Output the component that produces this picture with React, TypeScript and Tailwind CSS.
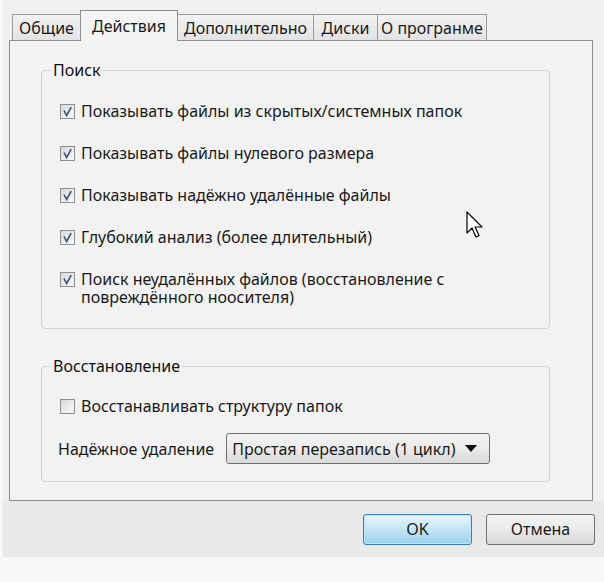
import React from 'react';

const font = { fontFamily: '"Noto Sans", "Liberation Sans", sans-serif' };

const tabs = [
  { t: 'Общие', w: 'w-[69px]' },
  { t: 'Действия', w: 'w-[98px]' },
  { t: 'Дополнительно', w: 'w-[137px]' },
  { t: 'Диски', w: 'w-[65px]' },
  { t: 'О програнме', w: 'w-[110px]' },
];

const searchOptions = [
  'Показывать файлы из скрытых/системных папок',
  'Показывать файлы нулевого размера',
  'Показывать надёжно удалённые файлы',
  'Глубокий анализ (более длительный)',
  'Поиск неудалённых файлов (восстановление с повреждённого ноосителя)',
];

function CheckBox({ checked }: { checked: boolean }) {
  return (
    <span className="mt-[2px] flex h-[15px] w-[15px] shrink-0 items-center justify-center border border-[#8f8f8f] bg-gradient-to-br from-[#d8d8d8] to-[#fbfbfb]">
      {checked && (
        <svg width="11" height="11" viewBox="0 0 11 11">
          <path d="M2 4.5 L4.6 9.5 L9.2 1.2" fill="none" stroke="#3d4f7d" strokeWidth="1.6" />
        </svg>
      )}
    </span>
  );
}

function Group({ title, children, className }: { title: string; children: React.ReactNode; className?: string }) {
  return (
    <fieldset className={`rounded-[4px] border border-[#d3d3d3] ${className ?? ''}`}>
      <legend className="-ml-[9px] px-[2px] text-[16px] leading-[18px] text-[#111]">{title}</legend>
      {children}
    </fieldset>
  );
}

export default function App() {
  return (
    <div className="relative flex h-[582px] w-[604px] flex-col border-l-[3px] border-[#f6f6f6] bg-[#f0f0f0] text-[#1a1a1a]" style={font}>
      <div className="flex flex-col pl-[6px] pr-[11px] pt-[10px]">
        <div className="flex items-end pl-[3px]">
          {tabs.map(({ t, w }, i) =>
            i === 1 ? (
              <div
                key={t}
                className={`relative z-10 -mb-px -ml-[1px] flex h-[31px] items-center justify-center border border-b-0 border-[#8c8e94] bg-[#f4f4f4] text-[16px] ${w}`}
              >
                {t}
              </div>
            ) : (
              <div
                key={t}
                className={`-ml-[1px] flex h-[26px] items-center justify-center border border-b-0 border-[#9a9a9a] bg-gradient-to-b from-[#f2f2f2] to-[#e3e3e3] text-[16px] first:ml-0 ${w}`}
              >
                {t}
              </div>
            )
          )}
        </div>
        <div className="flex h-[461px] flex-col border border-[#8c8e94] bg-[#f2f2f2] pl-[31px] pr-[42px] pt-[20px]">
          <Group title="Поиск" className="h-[268px] px-[18px]">
            <div className="mt-[23px] flex flex-col gap-[24px]">
              {searchOptions.map((o) => (
                <label key={o} className="flex items-start gap-[6px] text-[16px] leading-[18px]">
                  <CheckBox checked />
                  <span className="max-w-[440px]">{o}</span>
                </label>
              ))}
            </div>
          </Group>
          <Group title="Восстановление" className="mt-[28px] h-[125px] px-[18px]">
            <label className="mt-[22px] flex items-start gap-[6px] text-[16px] leading-[18px]">
              <CheckBox checked={false} />
              <span>Восстанавливать структуру папок</span>
            </label>
            <div className="mt-[18px] flex items-center gap-[12px] text-[16px]">
              <span className="-ml-[2px]">Надёжное удаление</span>
              <div className="flex h-[31px] w-[264px] items-center justify-between rounded-[3px] border border-[#707070] bg-gradient-to-b from-[#f3f3f3] via-[#ebebeb] to-[#d9d9d9] pl-[5px] pr-[12px]">
                <span>Простая перезапись (1 цикл)</span>
                <svg width="12" height="7" viewBox="0 0 12 7">
                  <path d="M0 0 H12 L6 7 Z" fill="#111" />
                </svg>
              </div>
            </div>
          </Group>
        </div>
      </div>
      <div className="flex h-[56px] items-center justify-end gap-[14px] bg-[#e9e9e9] pr-[9px]">
        <button className="h-[31px] w-[109px] rounded-[3px] border border-[#3c7fb1] bg-gradient-to-b from-[#e8f6fd] via-[#c4e5f6] to-[#98d1ef] text-[16px] shadow-[inset_0_0_0_1px_#bfe7fb]">
          OK
        </button>
        <button className="h-[31px] w-[109px] rounded-[3px] border border-[#707070] bg-gradient-to-b from-[#f2f2f2] via-[#ebebeb] to-[#d6d6d6] text-[16px]">
          Отмена
        </button>
      </div>
      <div className="flex-1 bg-[#f8f8f8]" />
      <svg className="absolute left-[463px] top-[211px]" width="20" height="28" viewBox="0 0 20 28">
        <path d="M1 1 V22 L6 17 L10 26 L13 24.5 L9 16 H16 Z" fill="#fff" stroke="#000" strokeWidth="1.2" strokeLinejoin="round" />
      </svg>
    </div>
  );
}
